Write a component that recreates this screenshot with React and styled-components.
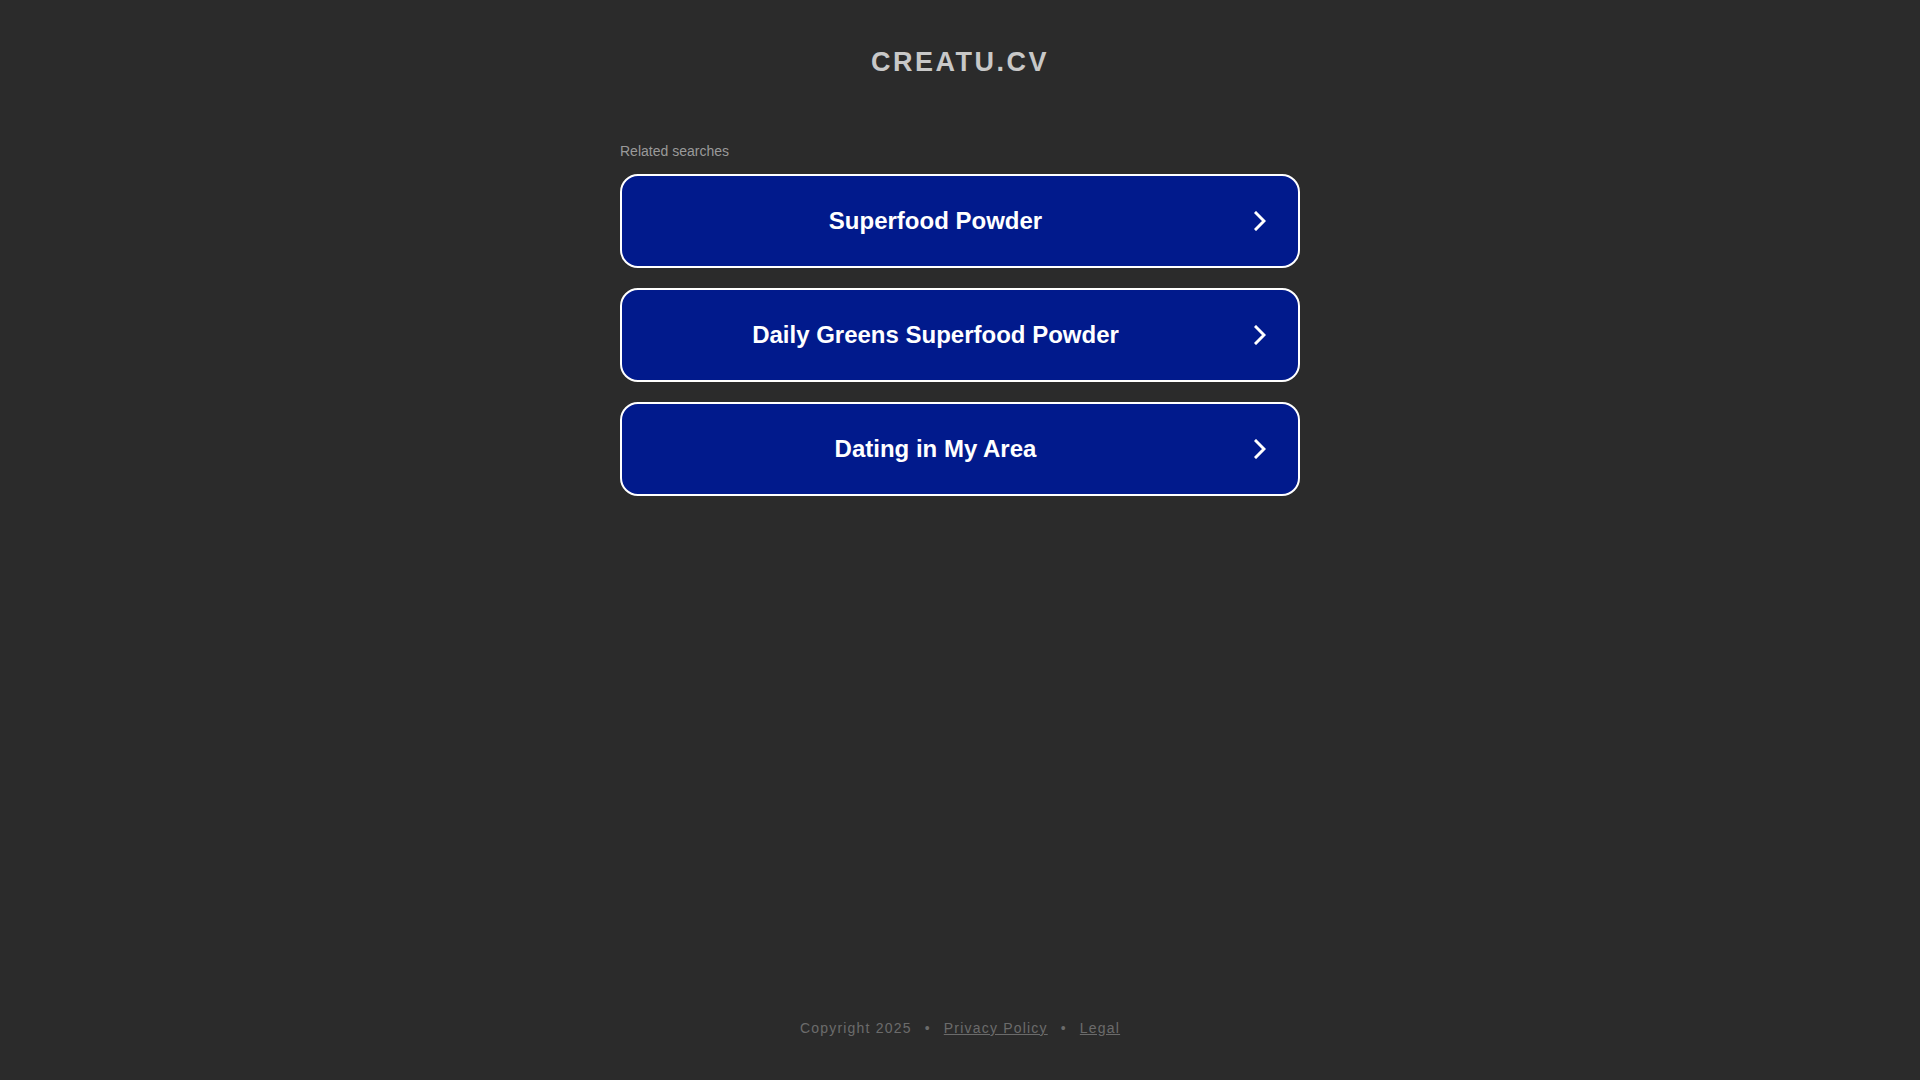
import styled, { createGlobalStyle } from 'styled-components';

const GlobalStyle = createGlobalStyle`
  html, body {
    margin: 0;
    padding: 0;
    background: #2b2b2b;
  }
  body {
    font-family: "Liberation Sans", Arial, sans-serif;
  }
`;

const Page = styled.div`
  min-height: 100vh;
  display: flex;
  flex-direction: column;
  align-items: center;
`;

const Header = styled.header`
  padding-top: 46px;
  text-align: center;
`;

const Title = styled.h1`
  margin: 0;
  font-size: 27px;
  line-height: 32px;
  font-weight: 700;
  letter-spacing: 2.5px;
  color: #c8c8c8;
`;

const Main = styled.main`
  width: 680px;
  margin-top: 65px;
  flex: 1;
`;

const Label = styled.div`
  font-size: 14px;
  line-height: 16px;
  color: #9a9a9a;
  margin-bottom: 15px;
`;

const List = styled.div`
  display: flex;
  flex-direction: column;
  gap: 20px;
`;

const SearchButton = styled.a`
  box-sizing: border-box;
  height: 94px;
  display: flex;
  align-items: center;
  padding-right: 32px;
  background: #011a8c;
  border: 2px solid #ffffff;
  border-radius: 18px;
  color: #ffffff;
  text-decoration: none;
  cursor: pointer;
`;

const ButtonText = styled.span`
  flex: 1;
  text-align: center;
  font-size: 24px;
  font-weight: 700;
  margin-right: 5px;
`;

const Chevron = () => (
  <svg width="12" height="20" viewBox="0 0 12 20" fill="none">
    <path
      d="M2 2 L10 10 L2 18"
      stroke="#ffffff"
      strokeWidth="3"
      strokeLinecap="square"
      strokeLinejoin="miter"
    />
  </svg>
);

const Footer = styled.footer`
  padding-bottom: 42px;
  font-size: 14px;
  line-height: 20px;
  letter-spacing: 1.2px;
  color: #6b6b6b;
  text-align: center;
`;

const FooterLink = styled.a`
  color: #6b6b6b;
  text-decoration: underline;
`;

const Dot = styled.span`
  margin: 0 13px;
`;

const searches = ['Superfood Powder', 'Daily Greens Superfood Powder', 'Dating in My Area'];

const App = () => {
  return (
    <>
      <GlobalStyle />
      <Page>
        <Header>
          <Title>CREATU.CV</Title>
        </Header>
        <Main>
          <Label>Related searches</Label>
          <List>
            {searches.map((s) => (
              <SearchButton key={s}>
                <ButtonText>{s}</ButtonText>
                <Chevron />
              </SearchButton>
            ))}
          </List>
        </Main>
        <Footer>
          Copyright 2025
          <Dot>•</Dot>
          <FooterLink>Privacy Policy</FooterLink>
          <Dot>•</Dot>
          <FooterLink>Legal</FooterLink>
        </Footer>
      </Page>
    </>
  );
};

export default App;
